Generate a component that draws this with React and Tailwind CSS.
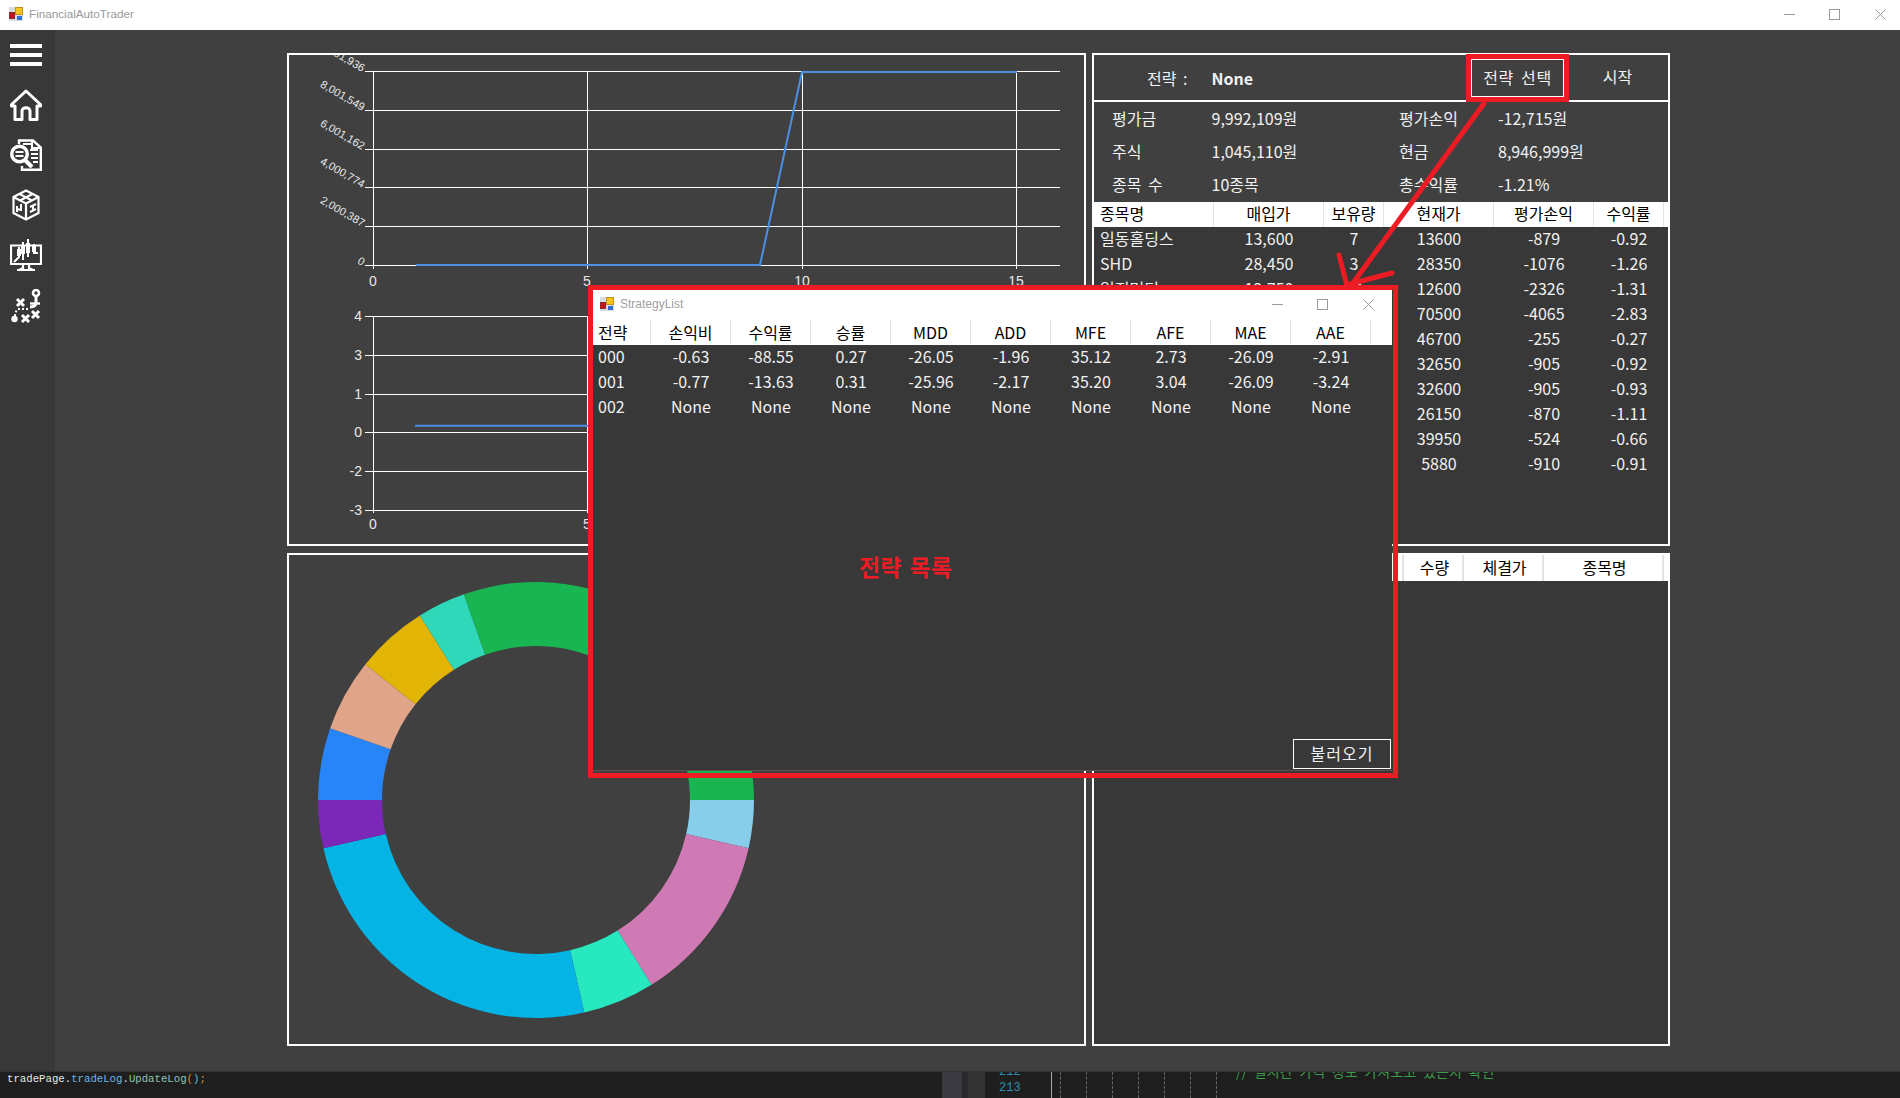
import React from 'react';

const RED = '#ed1c24';
const FONT = '"Noto Sans CJK KR", "Noto Sans", sans-serif';

const holdings = [
  ['일동홀딩스', '13,600', '7', '13600', '-879', '-0.92'],
  ['SHD', '28,450', '3', '28350', '-1076', '-1.26'],
  ['일진머티', '12,750', '14', '12600', '-2326', '-1.31'],
  ['', '', '', '70500', '-4065', '-2.83'],
  ['', '', '', '46700', '-255', '-0.27'],
  ['', '', '', '32650', '-905', '-0.92'],
  ['', '', '', '32600', '-905', '-0.93'],
  ['', '', '', '26150', '-870', '-1.11'],
  ['', '', '', '39950', '-524', '-0.66'],
  ['', '', '', '5880', '-910', '-0.91'],
];

const strategies = [
  ['000', '-0.63', '-88.55', '0.27', '-26.05', '-1.96', '35.12', '2.73', '-26.09', '-2.91'],
  ['001', '-0.77', '-13.63', '0.31', '-25.96', '-2.17', '35.20', '3.04', '-26.09', '-3.24'],
  ['002', 'None', 'None', 'None', 'None', 'None', 'None', 'None', 'None', 'None'],
];

const strategyHead = ['전략', '손익비', '수익률', '승률', 'MDD', 'ADD', 'MFE', 'AFE', 'MAE', 'AAE'];

const slices = [
  ['#87ceeb', 0, 12.8],
  ['#d07ab5', 12.8, 58],
  ['#28e8c0', 58, 77.2],
  ['#04b4e4', 77.2, 167.2],
  ['#7b28b8', 167.2, 180],
  ['#2885f8', 180, 199.2],
  ['#e0a488', 199.2, 218.5],
  ['#e2b406', 218.5, 237.8],
  ['#2ed8b8', 237.8, 250.7],
  ['#19b553', 250.7, 360],
];

const slicePath = (from, to) => {
  const cx = 536, cy = 800, R = 218, r = 154;
  const pt = (rad, deg) => {
    const a = (deg * Math.PI) / 180;
    return `${cx + rad * Math.cos(a)} ${cy + rad * Math.sin(a)}`;
  };
  const large = to - from > 180 ? 1 : 0;
  return `M${pt(R, from)} A${R} ${R} 0 ${large} 1 ${pt(R, to)} L${pt(r, to)} A${r} ${r} 0 ${large} 0 ${pt(r, from)} Z`;
};

const AppIcon = () => (
  <svg width="14" height="14" viewBox="0 0 14 14" className="shrink-0">
    <rect x="0" y="0" width="14" height="14" fill="#d8dbe0" />
    <rect x="0.5" y="5.5" width="5" height="6" fill="#c8141c" stroke="#8a2a2a" />
    <rect x="6.5" y="0.5" width="7" height="7" fill="#f6c21c" stroke="#c09020" />
    <rect x="8" y="9" width="5" height="4" fill="#2f6fd8" />
  </svg>
);

const WinControls = ({ className }) => (
  <div className={`flex items-center ${className}`}>
    <div className="w-[45px] flex justify-center">
      <svg width="11" height="11" viewBox="0 0 11 11"><path d="M0 5.5H11" stroke="#999" /></svg>
    </div>
    <div className="w-[45px] flex justify-center">
      <svg width="11" height="11" viewBox="0 0 11 11"><rect x="0.5" y="0.5" width="10" height="10" fill="none" stroke="#999" /></svg>
    </div>
    <div className="w-[46px] flex justify-center">
      <svg width="11" height="11" viewBox="0 0 11 11"><path d="M0.5 0.5L10.5 10.5M10.5 0.5L0.5 10.5" stroke="#999" /></svg>
    </div>
  </div>
);

const NavIcon = ({ children }) => (
  <svg width="32" height="32" viewBox="0 0 32 32" fill="none" stroke="white" strokeWidth="3">
    {children}
  </svg>
);

const Sidebar = () => (
  <div className="w-[55px] shrink-0 bg-[#383838] pt-[14px] pl-[10px] flex flex-col">
    <div className="flex flex-col gap-[5px] w-[32px]">
      <div className="h-1 bg-white" />
      <div className="h-1 bg-white" />
      <div className="h-1 bg-white" />
    </div>
    <div className="mt-[23px] flex flex-col gap-[18px]">
      <NavIcon>
        <path d="M16 2L30.5 15.5V17H27V30.5H20V22C20 17.5 12 17.5 12 22V30.5H5V17H1.5V15.5Z" strokeLinejoin="round" />
      </NavIcon>
      <NavIcon>
        <path d="M9 5V1.5H23L30.8 8.5V30.8H12V27" strokeWidth="2.4" />
        <path d="M22 2V9H30" strokeWidth="2" />
        <path d="M13 5H21M20 11H28M21 15H28M21 19H28M23 23H28" strokeWidth="2" />
        <circle cx="9.5" cy="15" r="7.8" strokeWidth="3.4" />
        <path d="M5.5 13H13.5M5.5 17H13.5" strokeWidth="2.2" />
        <path d="M15 21L22 28" strokeWidth="4" />
      </NavIcon>
      <NavIcon>
        <g strokeWidth="2.2">
          <path d="M16 1.5L28.5 8V24L16 30.5L3.5 24V8Z" />
          <path d="M3.5 8L16 14.5L28.5 8M16 14.5V30.5" />
          <path d="M9.5 5L22 11.5M22.5 5L10 11.5M7 17V23M11 15V21L7 20M20 18L26 15M20 23L26 20M23 17V22" strokeWidth="2" />
        </g>
      </NavIcon>
      <NavIcon>
        <g strokeWidth="2.2">
          <path d="M1 6.5H31V25H1Z" />
          <path d="M13 25V29L9 31M19 25V29L23 31M7 31H25" />
          <path d="M4 23L9 18V8M13 3V21M18 0V18M24 5V14H28" strokeWidth="2" />
          <path d="M7 10H11V17H7ZM11 7H15V15H11ZM16 4H20V14H16ZM22 7H26V13H22Z" fill="white" stroke="none" />
        </g>
      </NavIcon>
      <svg width="32" height="34" viewBox="0 0 32 34" fill="none" stroke="white">
        <circle cx="26" cy="4" r="3" strokeWidth="2.6" />
        <path d="M7 10L14 17M14 10L7 17M22 22L29 29M29 22L22 29M12 26L19 33M19 26L12 33" strokeWidth="3" />
        <path d="M26 8V13C26 17 23 18 20 18" strokeWidth="3" />
        <path d="M20 14.5L30 14.5" strokeWidth="2.4" />
        <path d="M18 20H8C6 22 5 24 5 27" strokeWidth="2" strokeDasharray="2 2" />
        <circle cx="4.5" cy="30" r="3.2" fill="white" stroke="none" />
      </svg>
    </div>
  </div>
);

const LeftCharts = () => {
  const equityTicks = [
    [71, '10,001,936'],
    [110, '8,001,549'],
    [149, '6,001,162'],
    [187, '4,000,774'],
    [226, '2,000,387'],
    [265, '0'],
  ];
  const rateTicks = [[316, '4'], [355, '3'], [394, '1'], [432, '0'], [471, '-2'], [510, '-3']];
  const xs = [[373, '0'], [587, '5'], [802, '10'], [1016, '15']];

  return (
    <svg viewBox="289 55 795 489" className="w-[795px] h-[489px] block overflow-hidden" fontFamily='"Liberation Sans", sans-serif'>
      {equityTicks.map(([y, label]) => (
        <g key={y}>
          <line x1="365" x2="1060" y1={y + 0.5} y2={y + 0.5} stroke="#fff" strokeWidth="1" />
          <text x="362" y={y + 1} fontSize="11" fill="#e8e8e8" textAnchor="end" transform={`rotate(30 362 ${y + 1})`}>{label}</text>
        </g>
      ))}
      {xs.map(([x, label]) => (
        <g key={x}>
          <line x1={x + 0.5} x2={x + 0.5} y1="71" y2="269" stroke="#fff" strokeWidth="1" />
          <text x={x} y="286" fontSize="14" fill="#e8e8e8" textAnchor="middle">{label}</text>
        </g>
      ))}
      <polyline points="416,265 760,265 802,72 1017,72" fill="none" stroke="#4a90e2" strokeWidth="2" />

      {rateTicks.map(([y, label]) => (
        <g key={y}>
          <line x1="365" x2="1060" y1={y + 0.5} y2={y + 0.5} stroke="#fff" strokeWidth="1" />
          <text x="362" y={y + 5} fontSize="14" fill="#e8e8e8" textAnchor="end">{label}</text>
        </g>
      ))}
      {xs.map(([x, label]) => (
        <g key={x}>
          <line x1={x + 0.5} x2={x + 0.5} y1="316" y2="513" stroke="#fff" strokeWidth="1" />
          <text x={x} y="529" fontSize="14" fill="#e8e8e8" textAnchor="middle">{label}</text>
        </g>
      ))}
      <line x1="415" x2="1017" y1="425.7" y2="425.7" stroke="#4a90e2" strokeWidth="2" />
    </svg>
  );
};

const Donut = () => (
  <svg viewBox="289 555 795 489" className="w-[795px] h-[489px] block">
    {slices.map(([color, from, to]) => (
      <path key={color} d={slicePath(from, to)} fill={color} />
    ))}
  </svg>
);

const Summary = ({ label, value, label2, value2 }) => (
  <div className="h-[33.33px] pb-[2px] flex items-center">
    <div className="w-[117.5px] pl-[18px]">{label}</div>
    <div className="w-[187.5px]">{value}</div>
    <div className="w-[99px]">{label2}</div>
    <div>{value2}</div>
  </div>
);

const AccountPanel = () => (
  <div className="border-2 border-white bg-[#383838] flex flex-col">
    <div className="h-[45px] shrink-0 bg-[#404040] border-b-2 border-white flex items-start box-content">
      <div className="w-[117.5px] pl-[53px] h-full flex items-center">전략 :</div>
      <div className="font-bold h-full flex items-center">None</div>
      <div className="relative ml-auto mr-[3px] mt-[4px] w-[93px] h-[38px] pb-[2px] border border-white tracking-[0.6px] flex items-center justify-center">
        전략 선택
        <span className="absolute -inset-[6px] border-[5px] border-[#ed1c24]" />
      </div>
      <div className="w-[101px] h-[45px] pb-[4px] flex items-center justify-center">시작</div>
    </div>
    <div className="bg-[#404040] shrink-0">
      <Summary label="평가금" value="9,992,109원" label2="평가손익" value2="-12,715원" />
      <Summary label="주식" value="1,045,110원" label2="현금" value2="8,946,999원" />
      <Summary label="종목 수" value="10종목" label2="총수익률" value2="-1.21%" />
    </div>
    <div className="h-[25px] shrink-0 bg-white text-black grid grid-cols-[120px_110px_60px_110px_100px_70px] items-center">
      <div className="h-full pl-[6px] pb-[2px] border-r border-[#e3e3e3] flex items-center">종목명</div>
      {['매입가', '보유량', '현재가', '평가손익', '수익률'].map((h) => (
        <div key={h} className="h-full pb-[2px] border-r border-[#e3e3e3] flex items-center justify-center">{h}</div>
      ))}
    </div>
    {holdings.map((row, i) => (
      <div key={i} className="h-[25px] shrink-0 pb-[2px] grid grid-cols-[120px_110px_60px_110px_100px_70px] items-center">
        <div className="pl-[6px] whitespace-nowrap">{row[0]}</div>
        {row.slice(1).map((cell, j) => (
          <div key={j} className="text-center">{cell}</div>
        ))}
      </div>
    ))}
  </div>
);

const FillsPanel = () => (
  <div className="border-2 border-white bg-[#383838]">
    <div className="h-[26px] bg-white text-black grid grid-cols-[130px_90px_90px_60px_80px_120px] items-center">
      {['주문번호', '시각', '주문 구분', '수량', '체결가', '종목명'].map((h) => (
        <div key={h} className="h-full pl-[3px] pb-[2px] border-r-2 border-[#e3e3e3] flex items-center justify-center whitespace-nowrap">{h}</div>
      ))}
    </div>
  </div>
);

const StrategyList = () => (
  <div className="absolute left-[588px] top-[285px] w-[810px] h-[493px] border-[5px] border-[#ed1c24]">
    <div className="w-[799px] h-[481px] bg-[#383838] flex flex-col relative border-b border-[#555]">
      <div className="h-[30px] shrink-0 pb-[2px] bg-white flex items-center pl-[7px]">
        <AppIcon />
        <span className="ml-[6px] text-[12px] text-[#a0a0a0]" style={{ fontFamily: '"Liberation Sans", sans-serif' }}>StrategyList</span>
        <WinControls className="ml-auto mr-[1px]" />
      </div>
      <div className="h-[25px] shrink-0 bg-white text-black grid grid-cols-[58px_repeat(9,80px)_21px] items-center">
        <div className="h-full pl-[5px] pb-[2px] border-r border-[#e3e3e3] flex items-center">전략</div>
        {strategyHead.slice(1).map((h) => (
          <div key={h} className="h-full pb-[2px] border-r border-[#e3e3e3] flex items-center justify-center">{h}</div>
        ))}
      </div>
      {strategies.map((row) => (
        <div key={row[0]} className="h-[25px] shrink-0 pb-[3px] grid grid-cols-[58px_repeat(9,80px)_21px] items-center">
          <div className="pl-[5px]">{row[0]}</div>
          {row.slice(1).map((cell, i) => (
            <div key={i} className="text-center">{cell}</div>
          ))}
        </div>
      ))}
      <button className="mt-auto self-end mr-px mb-px w-[98px] h-[30px] pb-[2px] border border-white tracking-[1px] flex items-center justify-center">불러오기</button>
      <div className="absolute left-[266px] top-[265px] text-[23px] font-bold text-[#ed1c24] whitespace-nowrap">전략 목록</div>
    </div>
  </div>
);

const Arrow = () => (
  <svg className="absolute inset-0 pointer-events-none" width="1900" height="1098" viewBox="0 0 1900 1098" fill="none" stroke={RED} strokeWidth="5">
    <path d="M1485 102L1353 283" />
    <path d="M1339 255L1347 286M1392 273L1350 284" strokeLinecap="round" />
  </svg>
);

const BottomStrip = () => (
  <div className="h-[27px] shrink-0 bg-[#1e1e1e] flex overflow-hidden border-t border-[#333]" style={{ fontFamily: '"Liberation Mono", monospace' }}>
    <div className="w-[942px] shrink-0 pl-[7px] -mt-[2px] text-[10.7px] whitespace-pre leading-[18px] text-[#e6e6e6]">
      tradePage.<span className="text-[#6cb6e6]">tradeLog</span>.<span className="text-[#8fc4b0]">UpdateLog</span>
      <span className="text-[#d88a3a]">(</span><span className="text-[#5cc0e0]">)</span><span className="text-[#d88a3a]">;</span>
    </div>
    <div className="w-[20px] shrink-0 bg-[#3a3a40]" />
    <div className="w-[6px] shrink-0 bg-[#2a2a2c]" />
    <div className="w-[17px] shrink-0 bg-[#333333]" />
    <div className="w-[66px] shrink-0 pl-[14px] -mt-[8px] text-[12px] leading-[16px] text-[#2b91af]">
      <div>212</div>
      <div>213</div>
    </div>
    <div className="w-[187px] shrink-0 flex pl-[8px] border-l border-[#aaa]">
      {[0, 1, 2, 3, 4, 5, 6].map((i) => (
        <div key={i} className="w-[26px] shrink-0 border-l border-dashed border-[#666]" />
      ))}
    </div>
    <div className="-mt-[9px] ml-[-2px] text-[14px] tracking-[0.2px] leading-[16px] text-[#3c9a4a] whitespace-nowrap" style={{ fontFamily: '"Noto Sans CJK KR", sans-serif' }}>
      // 실시간 가격 정보 가져오고 있는지 확인
    </div>
  </div>
);

export default function App() {
  return (
    <div className="relative w-full h-screen overflow-hidden flex flex-col bg-[#404040] text-[16px] leading-none text-[#f2f2f2] [word-spacing:3px]" style={{ fontFamily: FONT }}>
      <div className="h-[30px] shrink-0 pb-[2px] bg-white flex items-center pl-[9px]">
        <AppIcon />
        <span className="ml-[6px] text-[11.7px] text-[#9a9a9a]" style={{ fontFamily: '"Liberation Sans", sans-serif' }}>FinancialAutoTrader</span>
        <WinControls className="ml-auto mr-[-3px]" />
      </div>

      <div className="flex-1 flex min-h-0">
        <Sidebar />
        <div className="flex-1 pl-[232px] pt-[23px]">
          <div className="grid grid-cols-[799px_578px] grid-rows-[493px_493px] gap-x-[6px] gap-y-[7px]">
            <div className="border-2 border-white overflow-hidden"><LeftCharts /></div>
            <AccountPanel />
            <div className="border-2 border-white"><Donut /></div>
            <FillsPanel />
          </div>
        </div>
      </div>

      <BottomStrip />
      <StrategyList />
      <Arrow />
    </div>
  );
}
